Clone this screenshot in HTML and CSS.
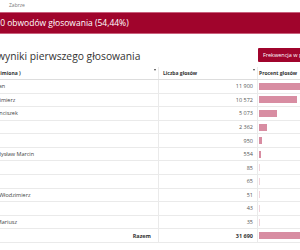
FILE: index.html
```html
<!DOCTYPE html>
<html lang="pl">
<head>
  <meta charset="UTF-8">
  <title>Zabrze - wyniki pierwszego głosowania</title>
  <link rel="stylesheet" href="styles.css">
</head>
<body>
  <div class="page">
    <div class="crumbs">Zabrze</div>

    <div class="banner">Dane z 90 obwodów głosowania (54,44%)</div>

    <div class="title-row">
      <h1>Szczegółowe wyniki pierwszego głosowania</h1>
      <button class="btn">Frekwencja w poszczególnych obwodach</button>
    </div>

    <table class="results">
      <thead>
        <tr>
          <th class="col-name"><div class="th-in"><span>Kandydat (nazwisko i imiona )</span><i class="sort"></i></div></th>
          <th class="col-votes"><div class="th-in"><span>Liczba głosów</span><i class="sort"></i></div></th>
          <th class="col-pct"><div class="th-in"><span>Procent głosów</span></div></th>
        </tr>
      </thead>
      <tbody>
        <tr><td class="col-name">Duda Andrzej Sebastian</td><td class="col-votes">11 900</td><td class="col-pct"><div class="bar" style="width:37.55%"></div></td></tr>
        <tr><td class="col-name">Trzaskowski Rafał Kazimierz</td><td class="col-votes">10 572</td><td class="col-pct"><div class="bar" style="width:33.36%"></div></td></tr>
        <tr><td class="col-name">Hołownia Szymon Franciszek</td><td class="col-votes">5 073</td><td class="col-pct"><div class="bar" style="width:16.01%"></div></td></tr>
        <tr><td class="col-name">Bosak Krzysztof</td><td class="col-votes">2 362</td><td class="col-pct"><div class="bar" style="width:7.45%"></div></td></tr>
        <tr><td class="col-name">Biedroń Robert</td><td class="col-votes">950</td><td class="col-pct"><div class="bar" style="width:3.00%"></div></td></tr>
        <tr><td class="col-name">Kosiniak-Kamysz Władysław Marcin</td><td class="col-votes">554</td><td class="col-pct"><div class="bar" style="width:1.75%"></div></td></tr>
        <tr><td class="col-name">Jakubiak Marek</td><td class="col-votes">85</td><td class="col-pct"><div class="bar small" style="width:0.27%"></div></td></tr>
        <tr><td class="col-name">Żółtek Stanisław Józef</td><td class="col-votes">65</td><td class="col-pct"><div class="bar small" style="width:0.21%"></div></td></tr>
        <tr><td class="col-name">Witkowski Waldemar Włodzimierz</td><td class="col-votes">51</td><td class="col-pct"><div class="bar small" style="width:0.16%"></div></td></tr>
        <tr><td class="col-name">Tanajno Paweł Jan</td><td class="col-votes">43</td><td class="col-pct"><div class="bar small" style="width:0.14%"></div></td></tr>
        <tr><td class="col-name">Piotrowski Mirosław Mariusz</td><td class="col-votes">35</td><td class="col-pct"><div class="bar small" style="width:0.11%"></div></td></tr>
      </tbody>
      <tfoot>
        <tr class="total"><td class="col-name">Razem</td><td class="col-votes">31 690</td><td class="col-pct"><div class="bar" style="width:100%"></div></td></tr>
      </tfoot>
    </table>
  </div>
</body>
</html>
```

FILE: styles.css
```css
body {
  margin: 0;
  font-family: "Open Sans", "DejaVu Sans", sans-serif;
  color: #333;
  background: #fff;
  overflow: hidden;
}
.page {
  margin-left: -66px;
  width: 436px;
}
.crumbs {
  height: 12px;
  box-sizing: border-box;
  padding: 2px 0 0 75px;
  font-size: 5px;
  line-height: 6px;
  color: #777;
}
.banner {
  height: 22px;
  box-sizing: border-box;
  padding-left: 32px;
  background: #a0042c;
  border-top: 1px solid #c9607c;
  border-bottom: 1px solid #c9607c;
  color: #fff;
  font-size: 8.5px;
  line-height: 20px;
  white-space: nowrap;
}
.title-row {
  display: flex;
  justify-content: space-between;
  align-items: flex-start;
  padding-top: 14px;
  height: 19px;
}
h1 {
  margin: 0;
  font-size: 10.3px;
  font-weight: 400;
  line-height: 16px;
  color: #333;
  white-space: nowrap;
}
.btn {
  height: 14px;
  margin-right: -2px;
  padding: 0 5px;
  border: none;
  border-radius: 1px;
  background: #a0042c;
  color: #fff;
  font-family: inherit;
  font-size: 5.5px;
  white-space: nowrap;
}
.results {
  width: 436px;
  border-collapse: collapse;
  table-layout: fixed;
  font-size: 5.5px;
}
.results th, .results td {
  padding: 0;
  white-space: nowrap;
  overflow: hidden;
}
.results th {
  height: 12px;
  border-bottom: 1px solid #ddd;
  font-size: 5px;
  font-weight: 700;
  color: #333;
  text-align: left;
}
.th-in {
  display: flex;
  justify-content: space-between;
  align-items: center;
  padding: 0 2px 0 4px;
}
.results th.col-name .th-in {
  padding-left: 12px;
}
.sort {
  width: 0;
  height: 0;
  margin-top: -7px;
  border-left: 1.5px solid transparent;
  border-right: 1.5px solid transparent;
  border-top: 2px solid #444;
}
.results td {
  height: 12.58px;
  border-bottom: 1px solid #eaeaea;
}
.col-name {
  width: 224px;
  color: #444;
}
.col-votes {
  width: 98px;
  border-left: 1px solid #eaeaea;
  text-align: right;
  color: #555;
}
.col-pct {
  width: 114px;
  border-left: 1px solid #eaeaea;
}
.results td.col-name {
  padding-left: 10px;
}
.results td.col-votes {
  padding-right: 4px;
}
.results td.col-pct {
  padding-left: 1px;
}
.results th.col-pct .th-in {
  padding-left: 1px;
}
.bar {
  height: 7px;
  max-width: 100px;
  background: #d88da2;
}
.bar.small {
  min-width: 1px;
  background: #f0d3db;
}
.total td {
  font-weight: 700;
  color: #333;
}
.total td.col-name {
  text-align: right;
  padding-right: 7px;
}
.total .bar {
  width: 100px;
}
```
